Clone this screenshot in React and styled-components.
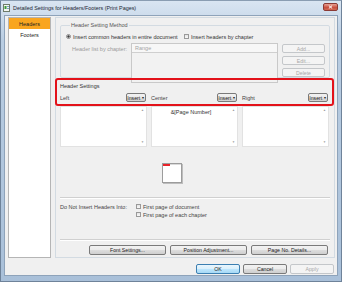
import React from "react";
import styled, { createGlobalStyle } from "styled-components";

const Global = createGlobalStyle`
  body {
    margin: 0;
    font-family: "Liberation Sans", Arial, sans-serif;
    font-size: 5.5px;
    color: #2b2b2b;
  }
`;

const Window = styled.div`
  width: 342px;
  height: 282px;
  box-sizing: border-box;
  display: flex;
  flex-direction: column;
  background: linear-gradient(#d9e5f2, #b9cde2 40px, #a9c0d9);
  border: 1px solid #6f839a;
  border-top-color: #8a9db2;
  white-space: nowrap;
`;

const TitleBar = styled.div`
  height: 14px;
  display: flex;
  align-items: center;
  gap: 3px;
  padding: 0 3px 0 2px;
`;

const Title = styled.div`
  flex: 1;
  font-size: 5.4px;
  color: #1c2633;
`;

const CloseButton = styled.div`
  width: 13px;
  height: 6px;
  margin-top: -2px;
  border-radius: 2px;
  border: 1px solid #8b3a35;
  background: linear-gradient(#e8a093, #c74f3f 60%, #d06a56);
  display: flex;
  align-items: center;
  justify-content: center;
`;

const Client = styled.div`
  flex: 1;
  margin: 0 3px 5px 3px;
  box-sizing: border-box;
  background: #f0f0f0;
  border: 1px solid #8ea3ba;
  padding: 1px 2px 0 3px;
  display: flex;
  flex-direction: column;
`;

const Main = styled.div`
  height: 241px;
  display: flex;
  gap: 4px;
`;

const SideList = styled.div`
  width: 44px;
  box-sizing: border-box;
  background: #fff;
  border: 1px solid #b5b5b5;
  display: flex;
  flex-direction: column;
`;

const SideItem = styled.div`
  height: 11px;
  display: flex;
  align-items: center;
  justify-content: center;
  background: ${(p) => (p.active ? "#f9a51f" : "transparent")};
  color: #222;
`;

const Panel = styled.div`
  flex: 1;
  box-sizing: border-box;
  border: 1px solid #d3dbe2;
  padding: 4px 4px 0 4px;
  display: flex;
  flex-direction: column;
`;

const Group = styled.fieldset`
  margin: 0;
  height: 56px;
  box-sizing: border-box;
  border: 1px solid #d3dbe2;
  border-radius: 2px;
  padding: 0 3px 0 5px;
  display: flex;
  flex-direction: column;
`;

const Legend = styled.legend`
  padding: 0 1px;
  margin-left: 4px;
  line-height: 7px;
  color: #555;
`;

const OptionRow = styled.div`
  height: 7px;
  margin-top: 4px;
  display: flex;
  align-items: center;
`;

const Option = styled.label`
  display: flex;
  align-items: center;
  gap: 2px;
  width: ${(p) => p.width || "auto"};
  color: #333;
`;

const Radio = styled.span`
  width: 5px;
  height: 5px;
  box-sizing: border-box;
  border-radius: 50%;
  border: 1px solid #8b8b8b;
  background: ${(p) => (p.checked ? "radial-gradient(#3a3a3a 40%, #cfcfcf 60%)" : "#f6f6f6")};
`;

const Check = styled.span`
  width: 5px;
  height: 5px;
  box-sizing: border-box;
  border: 1px solid #9a9a9a;
  background: linear-gradient(#e4e4e4, #f8f8f8);
`;

const ListRow = styled.div`
  margin-top: 3px;
  padding-left: 6px;
  display: flex;
  gap: 4px;
`;

const ListLabel = styled.div`
  width: 55px;
  padding-top: 3px;
  color: #9a9a9a;
`;

const ListBox = styled.div`
  width: 147px;
  height: 40px;
  box-sizing: border-box;
  border: 1px solid #c9c9c9;
  background: #f2f2f2;
`;

const ListHeader = styled.div`
  height: 8px;
  border-bottom: 1px solid #cfcfcf;
  background: #f7f7f7;
  padding-left: 3px;
  display: flex;
  align-items: center;
  color: #a5a5a5;
`;

const SideButtons = styled.div`
  display: flex;
  flex-direction: column;
  gap: 3px;
  padding-top: 1px;
`;

const Button = styled.div`
  width: ${(p) => p.w || 77}px;
  height: ${(p) => p.h || 10}px;
  box-sizing: border-box;
  border: 1px solid ${(p) => (p.disabled ? "#c4c7ca" : p.primary ? "#3c7fb1" : "#7a7a7a")};
  border-radius: 2px;
  background: ${(p) =>
    p.disabled
      ? "#f4f4f4"
      : p.primary
      ? "linear-gradient(#eaf6fd, #d9f0fc 50%, #bee6fd 51%, #a7d9f5)"
      : "linear-gradient(#f2f2f2, #ebebeb 50%, #dddddd 51%, #cfcfcf)"};
  color: ${(p) => (p.disabled ? "#a8a8a8" : "#222")};
  display: flex;
  align-items: center;
  justify-content: center;
  gap: 1px;
  font-size: 5.2px;
`;

const Highlight = styled.div`
  height: 28px;
  box-sizing: border-box;
  margin: 0 -4px 0 -5px;
  border: 2px solid #e3121a;
  border-radius: 3px;
  padding: 3px 3px 0 3px;
`;

const SectionTitle = styled.div`
  height: 7px;
  line-height: 7px;
  color: #333;
`;

const Columns = styled.div`
  display: grid;
  grid-template-columns: 87px 87px 87px;
  gap: 4px;
  margin-top: ${(p) => p.top || 0}px;
`;

const ColumnHead = styled.div`
  height: 9px;
  display: flex;
  align-items: center;
  justify-content: space-between;
  padding-right: 1px;
  color: #444;
`;

const Caret = styled.span`
  font-size: 3.5px;
`;

const TextPane = styled.div`
  height: 41px;
  box-sizing: border-box;
  background: #fff;
  border: 1px solid #e2e2e2;
  display: flex;
`;

const PaneText = styled.div`
  flex: 1;
  padding-top: 2px;
  text-align: center;
  color: #333;
`;

const ScrollBar = styled.div`
  width: 7px;
  display: flex;
  flex-direction: column;
  justify-content: space-between;
  align-items: center;
  padding: 1px 0 2px;
  color: #9a9a9a;
  font-size: 3px;
`;

const Preview = styled.div`
  margin: 16px 0 0 102px;
  width: 21px;
  height: 21px;
`;

const Separator = styled.div`
  height: 1px;
  background: #d0d0d0;
  border-bottom: 1px solid #fff;
  margin-top: ${(p) => p.top}px;
`;

const ExcludeRow = styled.div`
  margin-top: 4px;
  display: flex;
`;

const ExcludeLabel = styled.div`
  width: 76px;
  padding-top: 1px;
  color: #444;
`;

const CheckList = styled.div`
  display: flex;
  flex-direction: column;
  gap: 1px;
`;

const CheckItem = styled.label`
  height: 7px;
  display: flex;
  align-items: center;
  gap: 2px;
  color: #444;
`;

const ButtonRow = styled.div`
  display: flex;
  justify-content: flex-end;
  gap: ${(p) => p.gap || 4}px;
  margin-top: ${(p) => p.top}px;
  padding-right: ${(p) => p.right}px;
`;

const AppIcon = () => (
  <svg width="7" height="8" viewBox="0 0 7 8">
    <rect x="0.5" y="0.5" width="6" height="7" fill="#f4f7f1" stroke="#6e7c6a" />
    <rect x="1.5" y="2" width="2" height="3" fill="#3d9a3a" />
    <rect x="4" y="2" width="2" height="1" fill="#7aa0c8" />
    <rect x="4" y="4" width="2" height="1" fill="#7aa0c8" />
  </svg>
);

const CloseGlyph = () => (
  <svg width="5" height="4" viewBox="0 0 5 4">
    <path d="M0.8 0.5 L4.2 3.5 M4.2 0.5 L0.8 3.5" stroke="#fff" strokeWidth="1" />
  </svg>
);

const PageIcon = () => (
  <svg width="21" height="21" viewBox="0 0 21 21">
    <rect x="1" y="1" width="20" height="20" fill="#bdbdbd" />
    <rect x="0.5" y="0.5" width="19" height="19" fill="#fff" stroke="#9c9c9c" />
    <rect x="1" y="1" width="7" height="2" fill="#e8232a" />
    <rect x="8" y="1" width="11" height="1" fill="#dadada" />
  </svg>
);

const Pane = ({ text }) => (
  <TextPane>
    <PaneText>{text}</PaneText>
    <ScrollBar>
      <span>▲</span>
      <span>▼</span>
    </ScrollBar>
  </TextPane>
);

const Insert = () => (
  <Button w={20} h={9}>
    Insert<Caret>▼</Caret>
  </Button>
);

export default function App() {
  return (
    <Window>
      <Global />
      <TitleBar>
        <AppIcon />
        <Title>Detailed Settings for Headers/Footers (Print Pages)</Title>
        <CloseButton>
          <CloseGlyph />
        </CloseButton>
      </TitleBar>
      <Client>
        <Main>
          <SideList>
            <SideItem active>Headers</SideItem>
            <SideItem>Footers</SideItem>
          </SideList>
          <Panel>
            <Group>
              <Legend>Header Setting Method</Legend>
              <OptionRow>
                <Option width="118px">
                  <Radio checked />
                  Insert common headers in entire document
                </Option>
                <Option>
                  <Check />
                  Insert headers by chapter
                </Option>
              </OptionRow>
              <ListRow>
                <ListLabel>Header list by chapter:</ListLabel>
                <ListBox>
                  <ListHeader>Range</ListHeader>
                </ListBox>
                <SideButtons>
                  <Button w={43} h={9} disabled>Add...</Button>
                  <Button w={43} h={9} disabled>Edit...</Button>
                  <Button w={43} h={9} disabled>Delete</Button>
                </SideButtons>
              </ListRow>
            </Group>
            <Highlight>
              <SectionTitle>Header Settings</SectionTitle>
              <Columns top={3}>
                <ColumnHead>
                  Left
                  <Insert />
                </ColumnHead>
                <ColumnHead>
                  Center
                  <Insert />
                </ColumnHead>
                <ColumnHead>
                  Right
                  <Insert />
                </ColumnHead>
              </Columns>
            </Highlight>
            <Columns>
              <Pane />
              <Pane text="&[Page Number]" />
              <Pane />
            </Columns>
            <Preview>
              <PageIcon />
            </Preview>
            <Separator top={13} />
            <ExcludeRow>
              <ExcludeLabel>Do Not Insert Headers Into:</ExcludeLabel>
              <CheckList>
                <CheckItem>
                  <Check />
                  First page of document
                </CheckItem>
                <CheckItem>
                  <Check />
                  First page of each chapter
                </CheckItem>
              </CheckList>
            </ExcludeRow>
            <Separator top={21} />
            <ButtonRow top={4} right={2} gap={4}>
              <Button>Font Settings...</Button>
              <Button>Position Adjustment...</Button>
              <Button>Page No. Details...</Button>
            </ButtonRow>
          </Panel>
        </Main>
        <ButtonRow top={6} right={1} gap={3}>
          <Button w={44} primary>OK</Button>
          <Button w={44}>Cancel</Button>
          <Button w={44} disabled>Apply</Button>
        </ButtonRow>
      </Client>
    </Window>
  );
}
